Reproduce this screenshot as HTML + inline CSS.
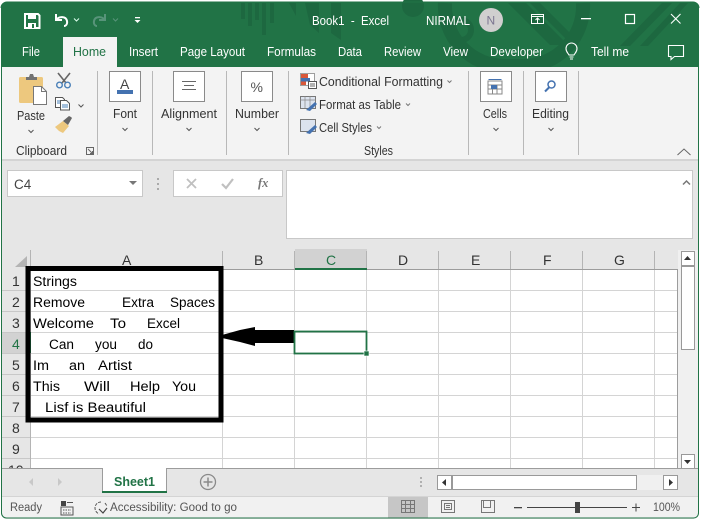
<!DOCTYPE html>
<html><head><meta charset="utf-8"><style>
html,body{margin:0;padding:0;background:#fff}
svg{display:block;position:absolute;left:0;top:0}
text{font-family:"Liberation Sans",sans-serif;white-space:pre}
.w{fill:#fff;font-size:12.5px}.k{fill:#333;font-size:12.5px}.c{fill:#000;font-size:13.5px}.h{fill:#333;font-size:14px}.s{fill:#555;font-size:11.5px}
</style></head><body>
<svg width="703" height="521" viewBox="0 0 703 521" xmlns="http://www.w3.org/2000/svg">
<defs><clipPath id="g"><rect x="2" y="250" width="676" height="218"/></clipPath></defs>
<rect width="703" height="521" fill="#fff"/>
<rect x="1" y="2" width="698" height="517" rx="6" fill="#e6e6e6"/>
<path d="M1 67V8a6 6 0 0 1 6-6H693a6 6 0 0 1 6 6V67Z" fill="#217346"/>
<g fill="#1d6840">
<rect x="241" y="3" width="4" height="16"/><rect x="248" y="3" width="4" height="23"/><rect x="255" y="3" width="4" height="17"/><rect x="262" y="3" width="4" height="32"/><rect x="270" y="3" width="4" height="20"/>
<path d="M289 3h7v13ZM305 3h14v30l-9-8ZM331 3h10v37l-10-7Z"/><circle cx="413" cy="6" r="11"/>
<path d="M508 3h18l42 42h-18ZM530 3h10l38 38h-10ZM620 46l42-43h10l-42 43ZM640 46l40-43h8l-40 43Z"/>
</g>
<circle cx="461" cy="30" r="10" fill="none" stroke="#1d6840" stroke-width="6"/><path d="M445 3a60 60 0 0 0 60 63h18a60 60 0 0 0 60-63" fill="none" stroke="#1d6840" stroke-width="14"/>
<rect x="2" y="67" width="696" height="92" fill="#f3f3f3"/>
<rect x="2" y="159" width="696" height="2" fill="#d4d4d4"/>
<rect x="63" y="37" width="54" height="31" fill="#f3f3f3"/>
<!-- QAT -->
<path d="M25 14h13l1.500 1.500V28H25Z" fill="none" stroke="#fff" stroke-width="2"/><rect x="28" y="14" width="8" height="5" fill="#fff"/><rect x="28" y="23" width="8" height="5" fill="#fff"/><rect x="32" y="24" width="2" height="4" fill="#217346"/>
<path d="M56 14v6h6M56 20c3-4 10-4 11 1 .6 3-1 5-3 5" fill="none" stroke="#fff" stroke-width="2"/>
<path d="M74 18.500l2.500 2.500 2.500-2.500" fill="none" stroke="#dfe" stroke-width="1"/>
<path d="M105 14v6h-6M105 20c-3-4-10-4-11 1-.6 3 1 5 3 5" fill="none" stroke="#58947a" stroke-width="2"/>
<path d="M113 18.500l2.500 2.500 2.500-2.500" fill="none" stroke="#58947a" stroke-width="1"/>
<rect x="135" y="17" width="5" height="1.300" fill="#fff"/><path d="M134.500 20h6l-3 3Z" fill="#fff"/>
<text class="w" x="312" y="25" textLength="77" lengthAdjust="spacingAndGlyphs">Book1  -  Excel</text>
<text class="w" x="426" y="25" textLength="44" lengthAdjust="spacingAndGlyphs">NIRMAL</text>
<circle cx="491" cy="20" r="12" fill="#d0cfcf"/><text x="486.500" y="24.500" font-size="12" fill="#7b7590">N</text>
<rect x="531.500" y="14.500" width="12" height="9" fill="none" stroke="#fff"/><path d="M531 16.500h13M537.500 23v-5M535.500 20l2-2 2 2" fill="none" stroke="#fff"/>
<rect x="581" y="18" width="10" height="1.300" fill="#fff"/>
<rect x="625.500" y="14.500" width="9" height="9" fill="none" stroke="#fff" stroke-width="1.200"/>
<path d="M671 14l9.500 9.500M680.500 14l-9.500 9.500" stroke="#fff" stroke-width="1.100"/>
<text class="w" x="22" y="56" textLength="18" lengthAdjust="spacingAndGlyphs">File</text>
<text x="73" y="56" font-size="12.500" fill="#217346" textLength="33" lengthAdjust="spacingAndGlyphs">Home</text>
<text class="w" x="129" y="56" textLength="29" lengthAdjust="spacingAndGlyphs">Insert</text>
<text class="w" x="180" y="56" textLength="65" lengthAdjust="spacingAndGlyphs">Page Layout</text>
<text class="w" x="267" y="56" textLength="49" lengthAdjust="spacingAndGlyphs">Formulas</text>
<text class="w" x="338" y="56" textLength="24" lengthAdjust="spacingAndGlyphs">Data</text>
<text class="w" x="384" y="56" textLength="37" lengthAdjust="spacingAndGlyphs">Review</text>
<text class="w" x="443" y="56" textLength="25" lengthAdjust="spacingAndGlyphs">View</text>
<text class="w" x="490" y="56" textLength="53" lengthAdjust="spacingAndGlyphs">Developer</text>
<text class="w" x="591" y="56" textLength="38" lengthAdjust="spacingAndGlyphs">Tell me</text>
<path d="M569 55c-1-2-3-3-3-6.500a5.500 5.500 0 0 1 11 0c0 3.500-2 4.500-3 6.500ZM569.500 57h4M570 59h3" fill="none" stroke="#fff" stroke-width="1.100"/>
<path d="M668.500 45.500h15v11h-9l-3.500 3v-3h-2.500Z" fill="none" stroke="#fff" stroke-width="1.100"/>
<!-- separators -->
<g fill="#b8b8b8"><rect x="97" y="71" width="1" height="84"/><rect x="152" y="71" width="1" height="84"/><rect x="226" y="71" width="1" height="84"/><rect x="288" y="71" width="1" height="84"/><rect x="468" y="71" width="1" height="84"/><rect x="523" y="71" width="1" height="84"/><rect x="578" y="71" width="1" height="84"/></g>
<!-- Paste -->
<rect x="19" y="77" width="24" height="26" rx="1.500" fill="#edc87e"/>
<path d="M26 77h3l1-3h3l1 3h3v3H26Z" fill="#727272"/>
<path d="M33.500 86.500h8l5 5v13h-13Z" fill="#fff" stroke="#777"/><path d="M41.500 86.500v5h5" fill="none" stroke="#777"/>
<path d="M58 73l8 10M70 73l-8 10" stroke="#666" stroke-width="1.600"/><circle cx="59.500" cy="85" r="2.800" fill="none" stroke="#4a80b8" stroke-width="1.400"/><circle cx="67.500" cy="85" r="2.800" fill="none" stroke="#4a80b8" stroke-width="1.400"/>
<path d="M55.500 97.500h7l2 2v8h-9Z" fill="#fff" stroke="#555"/><path d="M60.500 100.500h6l3 3v6.500h-9Z" fill="#fff" stroke="#555"/><path d="M57 101h3M57 103h3M62 105h6M62 107h6" stroke="#4a80b8"/>
<path d="M78.500 104.500l2.500 2.500 2.500-2.500" fill="none" stroke="#555"/>
<path d="M55 127l8-6 6 5-6 7-4-2Z" fill="#edc87e"/><path d="M63 121l6-5 2 1 1 1-4 7Z" fill="#666"/>
<text class="k" x="17" y="120" textLength="28" lengthAdjust="spacingAndGlyphs">Paste</text>
<path d="M28.500 130l2.500 2.500 2.500-2.500" fill="none" stroke="#555"/>
<text class="k" x="16" y="155" textLength="51" lengthAdjust="spacingAndGlyphs">Clipboard</text>
<path d="M86.500 147.500h7v7h-7ZM88 149l4 4M92.500 151v2.500H90" fill="none" stroke="#666"/>
<!-- Boxes -->
<g fill="#fff" stroke="#8a8a8a"><rect x="109.500" y="71.500" width="31" height="30"/><rect x="173.500" y="71.500" width="31" height="30"/><rect x="241.500" y="71.500" width="31" height="30"/><rect x="480.500" y="71.500" width="31" height="30"/><rect x="535.500" y="71.500" width="31" height="30"/></g>
<text x="120" y="89" font-size="14" fill="#444">A</text><rect x="117" y="90" width="16" height="4" fill="#4472b0"/>
<path d="M182 81.500h14M184 85.500h10M182 89.500h14" stroke="#666"/>
<text x="250.500" y="92" font-size="14" fill="#555">%</text>
<path d="M488 81h14v13h-14ZM488 85h14M488 89h14M492.500 85v9M497 85v9" fill="none" stroke="#888"/><rect x="491" y="85" width="6" height="4" fill="#4472b0"/><path d="M488.500 79.500h13" stroke="#4472b0"/>
<circle cx="551.500" cy="84.500" r="3.500" fill="none" stroke="#4472b0" stroke-width="1.500"/><path d="M549 87.500l-4 4" stroke="#4472b0" stroke-width="2"/>
<text class="k" x="113" y="118" textLength="24" lengthAdjust="spacingAndGlyphs">Font</text>
<text class="k" x="161" y="118" textLength="56" lengthAdjust="spacingAndGlyphs">Alignment</text>
<text class="k" x="235" y="118" textLength="44" lengthAdjust="spacingAndGlyphs">Number</text>
<text class="k" x="483" y="118" textLength="24" lengthAdjust="spacingAndGlyphs">Cells</text>
<text class="k" x="532" y="118" textLength="37" lengthAdjust="spacingAndGlyphs">Editing</text>
<g fill="none" stroke="#555"><path d="M122.500 128l2.500 2.500 2.500-2.500"/><path d="M186.500 128l2.500 2.500 2.500-2.500"/><path d="M254.500 128l2.500 2.500 2.500-2.500"/><path d="M493.500 128l2.500 2.500 2.500-2.500"/><path d="M548.500 128l2.500 2.500 2.500-2.500"/></g>
<!-- Styles -->
<rect x="300.500" y="73.500" width="14" height="12" fill="#fff" stroke="#888" stroke-width=".8"/><rect x="301" y="74" width="7" height="4" fill="#d9583a"/><rect x="301" y="78" width="9" height="3.500" fill="#4472b0"/><rect x="301" y="81.500" width="5" height="3.500" fill="#d9583a"/><rect x="308.500" y="81.500" width="8" height="7" fill="#fff" stroke="#555"/><path d="M310 84h5M310 86h5" stroke="#333" stroke-width=".8"/>
<rect x="300.500" y="96.500" width="15" height="12" fill="#dce3ee" stroke="#777"/><path d="M300 100h16M305 96v12M310 96v12" stroke="#888" stroke-width=".7"/><path d="M306 110l9-8 2 2-7 7Z" fill="#4472b0"/>
<rect x="300.500" y="119.500" width="15" height="12" fill="#dce3ee" stroke="#777"/><path d="M306 133l9-8 2 2-7 7Z" fill="#4472b0"/>
<text class="k" x="319" y="86" textLength="124" lengthAdjust="spacingAndGlyphs">Conditional Formatting</text>
<text class="k" x="319" y="109" textLength="82" lengthAdjust="spacingAndGlyphs">Format as Table</text>
<text class="k" x="319" y="132" textLength="53" lengthAdjust="spacingAndGlyphs">Cell Styles</text>
<g fill="none" stroke="#777"><path d="M447.500 80.500l2 2 2-2"/><path d="M406 103.500l2 2 2-2"/><path d="M377 126.500l2 2 2-2"/></g>
<text class="k" x="364" y="155" textLength="29" lengthAdjust="spacingAndGlyphs">Styles</text>
<path d="M677.500 155l6.500-6 6.500 6" fill="none" stroke="#666"/>
<!-- Formula bar -->
<rect x="7.500" y="170.500" width="135" height="26" fill="#fff" stroke="#c8c8c8"/>
<text x="14" y="189" font-size="13.500" fill="#444">C4</text><path d="M129 181h8l-4 4Z" fill="#777"/>
<g fill="#aaa"><rect x="157" y="178" width="2" height="2"/><rect x="157" y="183" width="2" height="2"/><rect x="157" y="188" width="2" height="2"/></g>
<rect x="173.500" y="170.500" width="109" height="26" fill="#fff" stroke="#c8c8c8"/>
<path d="M187 179l9 9M196 179l-9 9" stroke="#c0c0c0" stroke-width="1.800"/>
<path d="M222 184l4 4 7-9" fill="none" stroke="#c0c0c0" stroke-width="2.200"/>
<text x="258" y="187" font-size="12.500" font-style="italic" font-weight="bold" fill="#777" style="font-family:'Liberation Serif',serif">fx</text>
<rect x="286.500" y="170.500" width="406" height="68" fill="#fff" stroke="#c8c8c8"/>
<path d="M683 184.500l3.500-3.500 3.500 3.500" fill="none" stroke="#777" stroke-width="1.500"/>
<!-- Grid -->
<rect x="2" y="249" width="676" height="21" fill="#e6e6e6"/>
<rect x="295" y="249" width="72" height="20" fill="#d2d2d2"/>
<path d="M27 267V256L15 267Z" fill="#b4b4b4"/>
<rect x="31" y="270" width="646" height="198" fill="#fff"/>
<g fill="#d4d4d4">
<rect x="222" y="270" width="1" height="198"/><rect x="294" y="270" width="1" height="198"/><rect x="366" y="270" width="1" height="198"/><rect x="438" y="270" width="1" height="198"/><rect x="510" y="270" width="1" height="198"/><rect x="582" y="270" width="1" height="198"/><rect x="654" y="270" width="1" height="198"/>
<rect x="31" y="290" width="646" height="1"/><rect x="31" y="311" width="646" height="1"/><rect x="31" y="332" width="646" height="1"/><rect x="31" y="353" width="646" height="1"/><rect x="31" y="374" width="646" height="1"/><rect x="31" y="395" width="646" height="1"/><rect x="31" y="416" width="646" height="1"/><rect x="31" y="437" width="646" height="1"/><rect x="31" y="458" width="646" height="1"/>
</g>
<g fill="#b4b4b4"><rect x="222" y="251" width="1" height="18"/><rect x="294" y="251" width="1" height="18"/><rect x="366" y="251" width="1" height="18"/><rect x="438" y="251" width="1" height="18"/><rect x="510" y="251" width="1" height="18"/><rect x="582" y="251" width="1" height="18"/><rect x="654" y="251" width="1" height="18"/></g>
<rect x="31" y="269" width="646" height="1" fill="#9c9c9c"/><rect x="677" y="269" width="1" height="199" fill="#9c9c9c"/><rect x="30" y="250" width="1" height="218" fill="#b4b4b4"/>
<rect x="295" y="268" width="72" height="2" fill="#217346"/>
<rect x="2" y="332" width="28" height="21" fill="#d2d2d2"/><rect x="29" y="332" width="2" height="21" fill="#217346"/>
<g fill="#c8c8c8"><rect x="2" y="290" width="28" height="1"/><rect x="2" y="311" width="28" height="1"/><rect x="2" y="332" width="28" height="1"/><rect x="2" y="353" width="28" height="1"/><rect x="2" y="374" width="28" height="1"/><rect x="2" y="395" width="28" height="1"/><rect x="2" y="416" width="28" height="1"/><rect x="2" y="437" width="28" height="1"/><rect x="2" y="458" width="28" height="1"/></g>
<text class="h" x="122" y="265">A</text><text class="h" x="254" y="265">B</text><text x="326" y="265" font-size="14" fill="#217346">C</text><text class="h" x="398" y="265">D</text><text class="h" x="471" y="265">E</text><text class="h" x="543" y="265">F</text><text class="h" x="614" y="265">G</text>
<g clip-path="url(#g)"><text class="h" x="12" y="286">1</text><text class="h" x="12" y="307">2</text><text class="h" x="12" y="328">3</text><text x="12" y="349" font-size="14" fill="#217346">4</text><text class="h" x="12" y="370">5</text><text class="h" x="12" y="391">6</text><text class="h" x="12" y="412">7</text><text class="h" x="12" y="433">8</text><text class="h" x="12" y="454">9</text><text class="h" x="8" y="475">10</text></g>
<!-- cells -->
<text class="c" x="33" y="286" textLength="44" lengthAdjust="spacingAndGlyphs">Strings</text>
<text class="c" x="33" y="307" textLength="52" lengthAdjust="spacingAndGlyphs">Remove</text><text class="c" x="122" y="307" textLength="32" lengthAdjust="spacingAndGlyphs">Extra</text><text class="c" x="170" y="307" textLength="45" lengthAdjust="spacingAndGlyphs">Spaces</text>
<text class="c" x="33" y="328" textLength="61" lengthAdjust="spacingAndGlyphs">Welcome</text><text class="c" x="110" y="328" textLength="16" lengthAdjust="spacingAndGlyphs">To</text><text class="c" x="147" y="328" textLength="33" lengthAdjust="spacingAndGlyphs">Excel</text>
<text class="c" x="49" y="349" textLength="25" lengthAdjust="spacingAndGlyphs">Can</text><text class="c" x="95" y="349" textLength="22" lengthAdjust="spacingAndGlyphs">you</text><text class="c" x="138" y="349" textLength="15" lengthAdjust="spacingAndGlyphs">do</text>
<text class="c" x="33" y="370" textLength="16" lengthAdjust="spacingAndGlyphs">Im</text><text class="c" x="69" y="370" textLength="16" lengthAdjust="spacingAndGlyphs">an</text><text class="c" x="98" y="370" textLength="34" lengthAdjust="spacingAndGlyphs">Artist</text>
<text class="c" x="33" y="391" textLength="27" lengthAdjust="spacingAndGlyphs">This</text><text class="c" x="84" y="391" textLength="26" lengthAdjust="spacingAndGlyphs">Will</text><text class="c" x="130" y="391" textLength="30" lengthAdjust="spacingAndGlyphs">Help</text><text class="c" x="172" y="391" textLength="24" lengthAdjust="spacingAndGlyphs">You</text>
<text class="c" x="45" y="412" textLength="101" lengthAdjust="spacingAndGlyphs">Lisf is Beautiful</text>
<!-- black box & arrow -->
<rect x="28" y="268.500" width="193" height="151.500" fill="none" stroke="#000" stroke-width="5"/>
<path d="M222 335L240 330L255 327V330H294V343H255V346L240 342L222 338Z" fill="#000"/>
<!-- selection -->
<rect x="294.500" y="331.500" width="72" height="22" fill="none" stroke="#217346" stroke-width="1.800"/>
<rect x="364" y="351" width="5" height="5" fill="#217346" stroke="#fff" stroke-width=".6"/>
<!-- vscroll -->
<rect x="678" y="250" width="20" height="218" fill="#f0f0f0"/>
<rect x="681.500" y="251.500" width="13" height="14" fill="#fff" stroke="#999"/><path d="M684 260h7l-3.500-4Z" fill="#333"/>
<rect x="681.500" y="266.500" width="13" height="83" fill="#fff" stroke="#999"/>
<rect x="681.500" y="454.500" width="13" height="14" fill="#fff" stroke="#999"/><path d="M684 460h7l-3.500 4Z" fill="#333"/>
<!-- tabs -->
<rect x="2" y="468" width="696" height="1" fill="#9c9c9c"/>
<rect x="103" y="468" width="63" height="24" fill="#fff"/><path d="M102.500 468v23M166.500 468v23" stroke="#9c9c9c"/><rect x="102" y="491" width="65" height="2" fill="#217346"/>
<text x="114" y="486" font-size="12.500" font-weight="bold" fill="#217346" textLength="41" lengthAdjust="spacingAndGlyphs">Sheet1</text>
<path d="M33 478l-4 4 4 4ZM58 478l4 4-4 4Z" fill="#c8c8c8"/>
<circle cx="208" cy="482" r="7.500" fill="none" stroke="#8a8a8a" stroke-width="1.300"/><path d="M203.500 482h9M208 477.500v9" stroke="#8a8a8a" stroke-width="1.500"/>
<g fill="#b0b0b0"><rect x="420" y="477" width="2" height="2"/><rect x="420" y="481" width="2" height="2"/><rect x="420" y="485" width="2" height="2"/></g>
<rect x="437" y="475" width="241" height="15" fill="#f0f0f0"/>
<rect x="437.500" y="475.500" width="14" height="14" fill="#fff" stroke="#999"/><path d="M446 479v7l-4-3.500Z" fill="#333"/>
<rect x="452.500" y="475.500" width="184" height="14" fill="#fff" stroke="#999"/>
<rect x="663.500" y="475.500" width="14" height="14" fill="#fff" stroke="#999"/><path d="M669 479v7l4-3.500Z" fill="#333"/>
<!-- status -->
<path d="M2 497H698V513a5 5 0 0 1-5 5H7a5 5 0 0 1-5-5Z" fill="#f1f1f1"/><rect x="2" y="496" width="696" height="1" fill="#d4d4d4"/>
<text class="s" x="10" y="511" textLength="32" lengthAdjust="spacingAndGlyphs">Ready</text>
<rect x="61" y="501" width="5" height="5" fill="#444"/><path d="M61 507h12v8H61ZM67 502.500h6" fill="none" stroke="#555"/><path d="M63 510h8M63 513h8" stroke="#555" stroke-dasharray="1.500 1"/>
<path d="M101 502a6 6 0 0 0-6 6c0 3 2 5 4 6M105 503l2 3" fill="none" stroke="#555" stroke-dasharray="3 1.200"/><path d="M99 509l4 4 4-5" fill="none" stroke="#444" stroke-width="1.200"/>
<text class="s" x="110" y="511" textLength="127" lengthAdjust="spacingAndGlyphs">Accessibility: Good to go</text>
<rect x="388" y="497" width="40" height="21" fill="#c6c6c6"/>
<path d="M401.500 500.500h13v12h-13ZM401.500 504.500h13M401.500 508.500h13M405.500 500.500v12M410.500 500.500v12" fill="none" stroke="#777"/>
<rect x="441.500" y="500.500" width="13" height="12" fill="none" stroke="#777"/><path d="M444.500 503.500h7v6h-7ZM446 505.500h4M446 507.500h4" fill="none" stroke="#777"/>
<path d="M481.500 500.500h13v12h-13ZM483.500 500.500v7h7v-7" fill="none" stroke="#777"/>
<rect x="514" y="507" width="8" height="1.300" fill="#444"/>
<rect x="527" y="507" width="100" height="1" fill="#444"/><rect x="575" y="502" width="5" height="11" fill="#444"/>
<path d="M632 507.500h8M636 503.500v8" stroke="#444"/>
<text class="s" x="653" y="511" textLength="27" lengthAdjust="spacingAndGlyphs">100%</text>
<!-- window edge -->
<path d="M1.500 67V513a5 5 0 0 0 5 5H693a5 5 0 0 0 5.500-5V67" fill="none" stroke="#217346" stroke-width="1"/>
<path d="M1 8a6 6 0 0 1 6-6H693a6 6 0 0 1 6 6" fill="none" stroke="#217346"/>
</svg>
</body></html>
